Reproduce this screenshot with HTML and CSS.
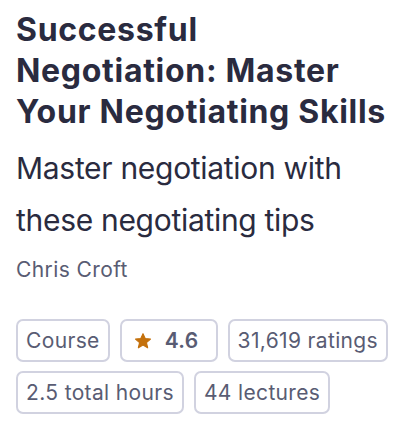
FILE: index.html
```html
<!DOCTYPE html>
<html lang="en">
<head>
<meta charset="utf-8">
<title>Course</title>
<link rel="stylesheet" href="styles.css">
</head>
<body>
<main class="card">
  <h1 class="title">Successful Negotiation: Master Your Negotiating Skills</h1>
  <p class="subtitle">Master negotiation with these negotiating tips</p>
  <p class="author">Chris Croft</p>
  <ul class="tags">
    <li class="tag">Course</li>
    <li class="tag tag-rating">
      <svg class="star" viewBox="0 0 24 24" width="18" height="18" aria-hidden="true"><path d="M12 2.2l2.9 6.6 7.1.6-5.4 4.7 1.6 7-6.2-3.7-6.2 3.7 1.6-7L2 9.4l7.1-.6z" fill="#c4710d" stroke="#c4710d" stroke-width="1.5" stroke-linejoin="round"/></svg>
      <span class="rating">4.6</span>
    </li>
    <li class="tag">31,619 ratings</li>
    <li class="tag">2.5 total hours</li>
    <li class="tag">44 lectures</li>
  </ul>
</main>
</body>
</html>
```

FILE: styles.css
```css
* { box-sizing: border-box; }
html, body { margin: 0; padding: 0; background: #fff; }
body { font-family: Inter, "Liberation Sans", Arial, sans-serif; color: #2a2b3f; }
.card { display: flex; flex-direction: column; padding: 10px 16px 0; }
.title { margin: 0; font-size: 32px; line-height: 40.8px; font-weight: 700; letter-spacing: 0.7px; }
.subtitle { margin: 10px 0 0; font-size: 30px; line-height: 52px; font-weight: 400; letter-spacing: -0.3px; }
.author { margin: 9px 0 0; font-size: 21px; line-height: 30px; color: #595c73; letter-spacing: 0.4px; }
.tags { list-style: none; margin: 34px 0 0; padding: 0; display: flex; flex-wrap: wrap; gap: 9px 10px; }
.tag { height: 43px; border: 2px solid #d1d2e0; border-radius: 7px; padding: 0 8px; display: flex; align-items: center; gap: 13px; font-size: 21px; color: #595c73; letter-spacing: 0.35px; }
.tag-rating { padding: 0 17px 0 12px; }
.rating { font-weight: 600; }
.star { display: block; }
```
